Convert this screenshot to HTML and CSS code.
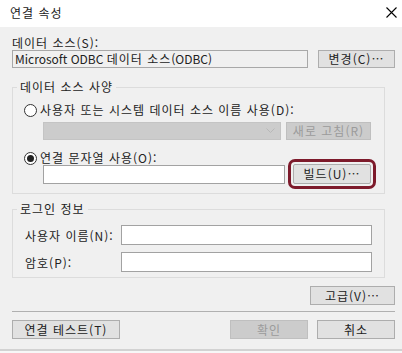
FILE: index.html
```html
<!DOCTYPE html>
<html lang="ko">
<head>
    <meta charset="UTF-8">
    <title>연결 속성</title>
    <link rel="stylesheet" href="styles.css">
</head>
<body>
    <div class="titlebar">
        <span class="title">연결 속성</span>
        <svg class="close" width="11" height="11" viewBox="0 0 11 11">
            <path d="M0.5 0.5 L10.5 10.5 M10.5 0.5 L0.5 10.5" stroke="#000" stroke-width="1.1" fill="none"/>
        </svg>
    </div>

    <div class="dialog">
        <div class="label-top">데이터 소스(S):</div>
        <div class="row">
            <div class="field readonly source"><span class="latin">Microsoft ODBC </span>데이터 소스<span class="latin">(ODBC)</span></div>
            <button class="btn change">변경(C)…</button>
        </div>

        <fieldset class="group spec">
            <legend>데이터 소스 사양</legend>
            <div class="radio-row first">
                <span class="radio"></span>
                <span>사용자 또는 시스템 데이터 소스 이름 사용(D):</span>
            </div>
            <div class="indent row">
                <div class="combo">
                    <svg width="9" height="6" viewBox="0 0 9 6"><path d="M0.5 0.5 L4.5 4.5 L8.5 0.5" stroke="#b8b8b8" fill="none"/></svg>
                </div>
                <button class="btn disabled refresh">새로 고침(R)</button>
            </div>
            <div class="radio-row second">
                <span class="radio checked"></span>
                <span>연결 문자열 사용(O):</span>
            </div>
            <div class="indent row conn">
                <div class="field conn-input"></div>
                <button class="btn build">빌드(U)…</button>
            </div>
        </fieldset>

        <fieldset class="group login">
            <legend>로그인 정보</legend>
            <div class="login-grid">
                <span>사용자 이름(N):</span>
                <div class="field"></div>
                <span>암호(P):</span>
                <div class="field"></div>
            </div>
        </fieldset>

        <div class="row right">
            <button class="btn advanced">고급(V)…</button>
        </div>

        <hr class="sep">

        <div class="row footer">
            <button class="btn test">연결 테스트(T)</button>
            <span class="spacer"></span>
            <button class="btn disabled ok">확인</button>
            <button class="btn cancel">취소</button>
        </div>
    </div>
</body>
</html>
```

FILE: styles.css
```css
* {
    box-sizing: border-box;
}
body {
    margin: 0;
    width: 402px;
    height: 353px;
    overflow: hidden;
    background: #f7f7f7;
    font-family: "Noto Sans CJK KR", "Noto Sans", sans-serif;
    font-size: 12px;
    letter-spacing: 1px;
    color: #222;
}
.latin {
    letter-spacing: 0;
}
.titlebar {
    height: 27px;
    background: #fff;
    display: flex;
    align-items: center;
    justify-content: space-between;
    padding: 0 5px 2px 10px;
}
.title {
    font-size: 12px;
    line-height: 14px;
}
.dialog {
    background: #f0f0f0;
    padding: 0 7px 10px 12px;
    border-bottom: 2px solid #d2d2d2;
}
.label-top {
    padding-top: 9px;
    line-height: 14px;
}
.row {
    display: flex;
    align-items: center;
}
.field {
    height: 20px;
    background: #fff;
    border: 1px solid #a2a2a2;
    line-height: 16px;
    padding: 0 2px;
    white-space: nowrap;
}
.readonly {
    background: #f0f0f0;
    border-color: #a8a8a8;
}
.source {
    width: 296px;
    height: 18px;
}
.btn {
    font: inherit;
    letter-spacing: 1px;
    color: #222;
    height: 19px;
    padding: 0;
    background: #e1e1e1;
    border: 1px solid #adadad;
    line-height: 16px;
}
.change {
    width: 77px;
    margin-left: 10px;
    height: 18px;
}
.group {
    margin: 12px 10px 0 0;
    padding: 0 12px 9px 0;
    border: 1px solid #dcdcdc;
}
.group legend {
    margin-left: 4px;
    padding: 0 3px;
    line-height: 14px;
}
.radio-row {
    display: flex;
    align-items: center;
    line-height: 14px;
    padding-left: 11px;
}
.radio-row.first {
    margin-top: 9px;
}
.radio-row.second {
    margin-top: 11px;
}
.radio {
    width: 13px;
    height: 13px;
    border: 1px solid #333;
    border-radius: 50%;
    background: #fff;
    margin-right: 3px;
    display: flex;
    align-items: center;
    justify-content: center;
}
.radio.checked::after {
    content: "";
    width: 7px;
    height: 7px;
    border-radius: 50%;
    background: #222;
}
.indent {
    padding-left: 30px;
}
.combo {
    width: 238px;
    height: 18px;
    margin-top: 5px;
    background: #cccccc;
    border: 1px solid #c4c4c4;
    display: flex;
    align-items: center;
    justify-content: flex-end;
    padding-right: 5px;
}
.disabled {
    background: #cccccc;
    border-color: #bfbfbf;
    color: #9b9b9b;
}
.refresh {
    width: 85px;
    height: 18px;
    margin: 5px 0 0 5px;
}
.conn {
    align-items: flex-end;
    margin-top: -1px;
}
.conn-input {
    width: 242px;
    height: 19px;
}
.build {
    width: 78px;
    height: 20px;
    margin-left: 8px;
    border-radius: 2px;
    outline: 3px solid #7d1a2b;
    outline-offset: 2px;
}
.login {
    margin-top: 8px;
    padding-bottom: 5px;
}
.login-grid {
    display: grid;
    grid-template-columns: 96px 1fr;
    row-gap: 7px;
    align-items: center;
    margin-top: 9px;
    padding-left: 12px;
}
.right {
    justify-content: flex-end;
    margin-top: 8px;
}
.advanced {
    width: 85px;
}
.sep {
    margin: 6px 0 0 0;
    border: none;
    border-top: 1px solid #b0b0b0;
}
.footer {
    margin-top: 8px;
}
.footer .btn {
    height: 19px;
}
.test {
    width: 108px;
}
.spacer {
    flex: 1;
}
.ok {
    width: 78px;
}
.cancel {
    width: 78px;
    margin-left: 9px;
}
```
